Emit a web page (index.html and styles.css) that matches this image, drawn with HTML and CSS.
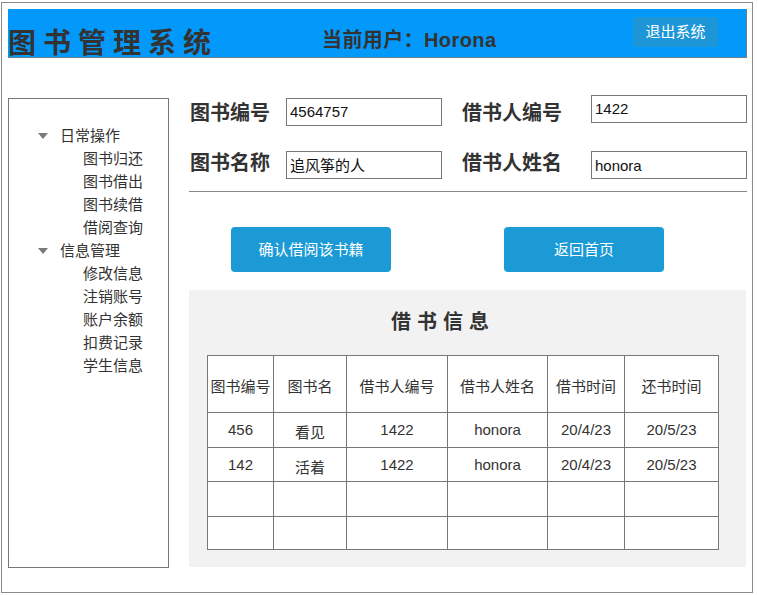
FILE: index.html
```html
<!DOCTYPE html>
<html lang="zh-CN">
<head>
<meta charset="utf-8">
<title>图书管理系统</title>
<link rel="stylesheet" href="styles.css">
</head>
<body>
<div class="frame">
  <header class="topbar">
    <h1 class="brand">图书管理系统</h1>
    <div class="user">当前用户：Horona</div>
    <a class="logout">退出系统</a>
  </header>
  <div class="main">
    <aside class="side">
      <ul class="menu">
        <li class="group"><span class="tri"></span>日常操作</li>
        <li class="item">图书归还</li>
        <li class="item">图书借出</li>
        <li class="item">图书续借</li>
        <li class="item">借阅查询</li>
        <li class="group"><span class="tri"></span>信息管理</li>
        <li class="item">修改信息</li>
        <li class="item">注销账号</li>
        <li class="item">账户余额</li>
        <li class="item">扣费记录</li>
        <li class="item">学生信息</li>
      </ul>
    </aside>
    <section class="content">
      <div class="row row1">
        <label class="lbl lbl-left">图书编号</label>
        <div class="inp inp-left">4564757</div>
        <label class="lbl lbl-right">借书人编号</label>
        <div class="inp inp-right">1422</div>
      </div>
      <div class="row row2">
        <label class="lbl lbl-left">图书名称</label>
        <div class="inp inp-left">追风筝的人</div>
        <label class="lbl lbl-right">借书人姓名</label>
        <div class="inp inp-right">honora</div>
      </div>
      <div class="rule"></div>
      <div class="actions">
        <a class="btn btn-confirm">确认借阅该书籍</a>
        <a class="btn btn-back">返回首页</a>
      </div>
      <div class="panel">
        <h2 class="panel-title">借书信息</h2>
        <table class="grid">
          <colgroup>
            <col class="c1"><col class="c2"><col class="c3"><col class="c4"><col class="c5"><col class="c6">
          </colgroup>
          <tr class="head"><td>图书编号</td><td>图书名</td><td>借书人编号</td><td>借书人姓名</td><td>借书时间</td><td>还书时间</td></tr>
          <tr class="r1"><td>456</td><td class="cjk">看见</td><td>1422</td><td>honora</td><td>20/4/23</td><td>20/5/23</td></tr>
          <tr class="r2"><td>142</td><td class="cjk">活着</td><td>1422</td><td>honora</td><td>20/4/23</td><td>20/5/23</td></tr>
          <tr class="r3"><td></td><td></td><td></td><td></td><td></td><td></td></tr>
          <tr class="r4"><td></td><td></td><td></td><td></td><td></td><td></td></tr>
        </table>
      </div>
    </section>
  </div>
</div>
</body>
</html>
```

FILE: styles.css
```css
* { box-sizing: border-box; }
html, body { margin: 0; padding: 0; background: #fff; }
body {
  font-family: "Liberation Sans", "Noto Sans CJK SC", sans-serif;
  color: #333;
}
.frame {
  margin: 2px 0 0 1px;
  width: 752px;
  height: 591px;
  border: 1px solid #8a8a8a;
  padding: 6px 0 0 6px;
}
.topbar {
  display: flex;
  align-items: flex-start;
  width: 739px;
  height: 49px;
  background: #0399fb;
  border-right: 1px solid #6e7f8c;
  border-bottom: 1px solid #6e7f8c;
}
.brand {
  margin: 15px 0 0 0;
  font-size: 28px;
  line-height: 34px;
  font-weight: bold;
  letter-spacing: 7px;
  color: #333;
  font-family: "Noto Sans CJK SC", sans-serif;
  width: 314px;
  white-space: nowrap;
}
.user {
  margin-top: 17px;
  font-size: 20px;
  line-height: 28px;
  font-weight: bold;
  color: #333;
  white-space: nowrap;
  letter-spacing: 0.4px;
}
.logout {
  margin: 8px 28px 0 auto;
  width: 85px;
  height: 30px;
  line-height: 30px;
  text-align: center;
  background: #1c96d6;
  color: #fff;
  font-size: 15px;
}
.main {
  display: flex;
  align-items: flex-start;
  margin-top: 37px;
}
.side {
  margin-top: 3px;
  width: 161px;
  height: 470px;
  border: 1px solid #777;
}
.menu {
  list-style: none;
  margin: 0;
  padding: 25px 0 0 0;
  font-size: 15px;
  line-height: 23px;
  color: #333;
}
.group {
  position: relative;
  padding-left: 51px;
}
.tri {
  position: absolute;
  left: 29px;
  top: 9px;
  width: 0;
  height: 0;
  border-left: 5px solid transparent;
  border-right: 5px solid transparent;
  border-top: 6px solid #7a7a7a;
}
.item { padding-left: 74px; }
.content {
  margin-left: 20px;
  width: 558px;
}
.row {
  display: flex;
  align-items: flex-start;
}
.row2 { margin-top: 24px; }
.lbl {
  font-size: 20px;
  line-height: 28px;
  font-weight: bold;
  color: #333;
  white-space: nowrap;
}
.lbl-left { width: 96px; margin-left: 1px; }
.lbl-right { width: 129px; margin-left: 20px; }
.row1 .lbl { margin-top: 4px; }
.row2 .lbl { margin-top: -2px; }
.inp {
  width: 156px;
  height: 28px;
  border: 1px solid #777;
  background: #fff;
  color: #111;
  font-size: 15px;
  line-height: 26px;
  padding-left: 3px;
}
.row1 .inp-left { margin-top: 3px; }
.row2 .inp { padding-top: 1px; }
.rule {
  margin-top: 12px;
  height: 1px;
  background: #888;
}
.actions {
  display: flex;
  margin-top: 35px;
  padding-left: 42px;
  gap: 113px;
}
.btn {
  display: block;
  width: 160px;
  height: 45px;
  line-height: 45px;
  text-align: center;
  background: #1b9ad6;
  color: #fff;
  font-size: 15px;
  border-radius: 4px;
}
.panel {
  margin-top: 18px;
  width: 557px;
  height: 277px;
  background: #f2f2f2;
  padding: 17px 0 0 18px;
}
.panel-title {
  margin: 0 0 0 184px;
  text-align: left;
  font-size: 20px;
  line-height: 28px;
  font-weight: bold;
  letter-spacing: 6px;
  color: #333;
  font-family: "Noto Sans CJK SC", sans-serif;
}
.grid {
  margin-top: 20px;
  border-collapse: collapse;
  table-layout: fixed;
  width: 511px;
  background: #fff;
  font-size: 15px;
  color: #333;
}
.grid td {
  border: 1px solid #777;
  text-align: center;
  padding: 0;
  white-space: nowrap;
}
.c1 { width: 66px; }
.c2 { width: 73px; }
.c3 { width: 101px; }
.c4 { width: 100px; }
.c5 { width: 77px; }
.c6 { width: 94px; }
.head { height: 57px; }
.head td { padding-top: 3px; }
.r1 { height: 35px; }
.r2 { height: 34px; }
.r3 { height: 35px; }
.r4 { height: 33px; }
.r1 td, .r2 td { vertical-align: top; padding-top: 8px; }
.grid td.cjk { padding-top: 8px; }
```
